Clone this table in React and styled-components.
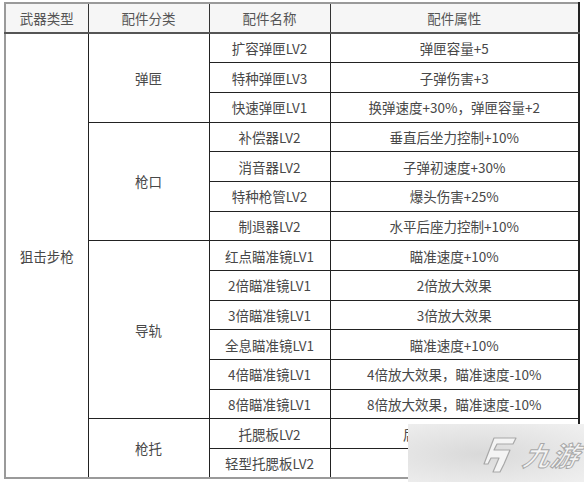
import React from 'react';
import styled, { createGlobalStyle } from 'styled-components';

const GlobalStyle = createGlobalStyle`
  * {
    margin: 0;
    padding: 0;
    box-sizing: border-box;
  }

  body {
    font-family: "Noto Sans CJK SC", "Noto Sans", sans-serif;
    background-color: #ffffff;
    padding: 2px 0 0 4px;
    overflow: hidden;
  }
`;

const Page = styled.div`
  position: relative;
  width: 580px;
  height: 480px;
`;

const Table = styled.table`
  width: 574px;
  border-collapse: collapse;
  table-layout: fixed;
  border-top: 2px solid #9a9a9a;
  border-left: 2px solid #9a9a9a;
  border-bottom: 2px solid #9a9a9a;
  border-right: 2px solid #222;
`;

const Head = styled.th`
  height: 30px;
  background-color: #f6f6f6;
  color: #555;
  font-weight: 400;
  font-size: 13.5px;
  border: 1px solid #333;
  border-top: none;
  border-bottom: 2px solid #555;
`;

const Cell = styled.td`
  height: 29.7px;
  color: #484848;
  font-size: 13.5px;
  text-align: center;
  vertical-align: middle;
  border: 1px solid #222;
  white-space: nowrap;
  overflow: hidden;
`;

const Watermark = styled.div`
  position: absolute;
  right: -4px;
  bottom: -2px;
  width: 180px;
  height: 60px;
  background: radial-gradient(ellipse at 40% 50%, #d9d9d9 0%, #e4e4e4 45%, #f1f1f1 100%);
  display: flex;
  align-items: center;
  justify-content: flex-end;
  gap: 4px;
  padding-right: 8px;
`;

const BrandText = styled.span`
  font-family: "Noto Sans CJK SC", sans-serif;
  font-size: 27px;
  font-weight: 700;
  font-style: italic;
  color: #f4f4f4;
  -webkit-text-stroke: 1px #a8a8a8;
  letter-spacing: 1px;
  transform: skewX(-12deg);
`;

const groups = [
  {
    name: '弹匣',
    rows: [
      ['扩容弹匣LV2', '弹匣容量+5'],
      ['特种弹匣LV3', '子弹伤害+3'],
      ['快速弹匣LV1', '换弹速度+30%，弹匣容量+2'],
    ],
  },
  {
    name: '枪口',
    rows: [
      ['补偿器LV2', '垂直后坐力控制+10%'],
      ['消音器LV2', '子弹初速度+30%'],
      ['特种枪管LV2', '爆头伤害+25%'],
      ['制退器LV2', '水平后座力控制+10%'],
    ],
  },
  {
    name: '导轨',
    rows: [
      ['红点瞄准镜LV1', '瞄准速度+10%'],
      ['2倍瞄准镜LV1', '2倍放大效果'],
      ['3倍瞄准镜LV1', '3倍放大效果'],
      ['全息瞄准镜LV1', '瞄准速度+10%'],
      ['4倍瞄准镜LV1', '4倍放大效果，瞄准速度-10%'],
      ['8倍瞄准镜LV1', '8倍放大效果，瞄准速度-10%'],
    ],
  },
  {
    name: '枪托',
    rows: [
      ['托腮板LV2', '后坐力控制+10%'],
      ['轻型托腮板LV2', '开镜速度+10%'],
    ],
  },
];

const total = groups.reduce((n, g) => n + g.rows.length, 0);

const Logo = () => (
  <svg width="38" height="40" viewBox="0 0 38 40">
    <path
      d="M12 4 L34 4 L31 10 L15 10 L12 16 L28 16 L22 30 L18 38 L11 38 L17 24 L9 24 L6 30 L2 30 Z"
      fill="#f4f4f4"
      stroke="#a8a8a8"
      strokeWidth="1.2"
      strokeLinejoin="round"
    />
  </svg>
);

const App = () => {
  let first = true;
  return (
    <Page>
      <GlobalStyle />
      <Table>
        <colgroup>
          <col style={{ width: 83 }} />
          <col style={{ width: 121 }} />
          <col style={{ width: 121 }} />
          <col style={{ width: 249 }} />
        </colgroup>
        <thead>
          <tr>
            <Head>武器类型</Head>
            <Head>配件分类</Head>
            <Head>配件名称</Head>
            <Head>配件属性</Head>
          </tr>
        </thead>
        <tbody>
          {groups.map((g) =>
            g.rows.map((r, i) => {
              const showType = first;
              first = false;
              return (
                <tr key={r[0]}>
                  {showType && <Cell rowSpan={total}>狙击步枪</Cell>}
                  {i === 0 && <Cell rowSpan={g.rows.length}>{g.name}</Cell>}
                  <Cell>{r[0]}</Cell>
                  <Cell>{r[1]}</Cell>
                </tr>
              );
            })
          )}
        </tbody>
      </Table>
      <Watermark>
        <Logo />
        <BrandText>九游</BrandText>
      </Watermark>
    </Page>
  );
};

export default App;
